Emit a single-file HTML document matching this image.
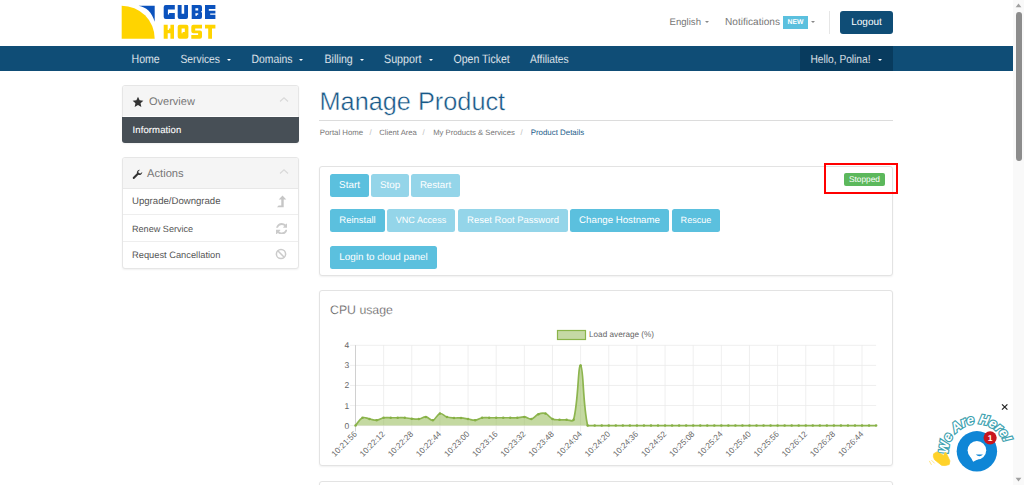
<!DOCTYPE html>
<html><head><meta charset="utf-8">
<style>
*{box-sizing:border-box;margin:0;padding:0}
html,body{width:1024px;height:485px;overflow:hidden;background:#fff;font-family:"Liberation Sans",sans-serif;color:#333;text-rendering:geometricPrecision}
.a{position:absolute;white-space:nowrap}
.ni{position:absolute;top:53.6px;font-size:10.5px;color:#f4f7fa;line-height:13px;white-space:nowrap;transform:scaleY(1.15);transform-origin:0 9px;-webkit-text-stroke:0.12px #0f4d76}
.cr{position:absolute;width:0;height:0;border-left:2px solid transparent;border-right:2px solid transparent;border-top:2px solid #fff}
.panel{position:absolute;border:1px solid #e3e3e3;border-radius:3px;background:#fff;box-shadow:0 1px 2px rgba(0,0,0,.06)}
.btn{position:absolute;height:23px;border-radius:2.5px;background:#5bc0de;color:#fff;font-size:9.6px;line-height:23px;text-align:center;white-space:nowrap}
.btn.d{background:#94d5e9}
.si{position:absolute;left:132px;font-size:9.3px;color:#555;line-height:12px;white-space:nowrap}
</style></head><body>

<!-- logo -->
<svg class="a" style="left:0;top:0" width="230" height="45" viewBox="0 0 230 45">
  <path d="M121.7 5.7 A33 33 0 0 1 154.7 38.7 L121.7 38.7 Z" fill="#ffd400"/>
  <path d="M138.6 5.7 L154.7 5.7 L154.7 21.8 C152 12 146 7 138.6 5.7 Z" fill="#0b52bd"/>
  <g fill="#0b52bd" fill-rule="evenodd">
    <path d="M165.7 5.1 h9.1 v4.4 h-6.9 v5 h1.2 v-1.4 h1.8 v0 h3.9 v5.8 h-9.1 q-2 0 -2 -2 v-9.8 q0 -2 2 -2 Z"/>
    <path d="M177.7 5.1 h3.9 v8.6 h2.6 v-8.6 h3.8 v11.8 q0 2 -2 2 h-6.3 q-2 0 -2 -2 Z"/>
    <path d="M191.7 5.1 h8.3 q2 0 2 2 v3.6 l-1 1 l1 1 v4.2 q0 2 -2 2 h-8.3 Z M195.4 8.3 v2.3 h2.8 v-2.3 Z M195.4 13.3 v2.4 h1.6 v-1 h1.2 v-1.4 Z"/>
    <path d="M205 5.1 h10.4 v3.8 h-6.6 v1.8 h6.6 v2.8 h-5.2 v1.2 h5.2 v4.2 h-10.4 Z"/>
  </g>
  <g fill="#ffd400" fill-rule="evenodd">
    <path d="M163.7 24.7 h4 v5.3 h1.2 v-1.5 h1.5 v-3.8 h3.6 v14 h-3.6 v-5.5 h-2.7 v5.5 h-4 Z"/>
    <path d="M179.7 24.7 h6.7 q2 0 2 2 v10 q0 2 -2 2 h-6.7 q-2 0 -2 -2 v-10 q0 -2 2 -2 Z M181.6 28.5 v4.8 h1 v-1.2 h2.2 v-3.6 Z"/>
    <path d="M193.3 24.7 h8.7 v3.8 h-6.8 v1.9 h4.8 q2 0 2 2 v4.3 q0 2 -2 2 h-8.7 v-3.8 h6.8 v-1.6 h-4.8 q-2 0 -2 -2 v-4.6 q0 -2 2 -2 Z"/>
    <path d="M205 24.7 h10.4 v3.9 h-3.4 v10.1 h-3.8 v-10.1 h-3.2 Z"/>
  </g>
</svg>

<!-- top right -->
<div class="a" style="left:669.5px;top:17px;font-size:9.6px;color:#777;line-height:12px">English</div>
<div class="cr" style="left:705px;top:21px;border-top-color:#888"></div>
<div class="a" style="left:725px;top:16.6px;font-size:10.1px;color:#777;line-height:12px">Notifications</div>
<div class="a" style="left:783px;top:16px;width:25px;height:13px;background:#5bc0de;color:#fff;font-size:6.8px;font-weight:bold;line-height:13.5px;text-align:center">NEW</div>
<div class="cr" style="left:811px;top:21px;border-top-color:#888"></div>
<div class="a" style="left:829px;top:11px;width:1px;height:23px;background:#e6e6e6"></div>
<div class="a" style="left:840px;top:10.5px;width:53px;height:23.5px;background:#0f4d76;border-radius:3px;color:#fff;font-size:10px;line-height:24.5px;text-align:center">Logout</div>

<!-- nav -->
<div class="a" style="left:0;top:46px;width:1013px;height:25px;background:#0f4d76"></div>
<div class="a" style="left:800px;top:46px;width:93px;height:25px;background:#083b5e"></div>
<div class="ni" style="left:131.5px;font-size:10.6px">Home</div>
<div class="ni" style="left:180.5px;font-size:10.3px">Services</div><div class="cr" style="left:227px;top:58.5px"></div>
<div class="ni" style="left:251.5px;font-size:10.4px">Domains</div><div class="cr" style="left:299px;top:58.5px"></div>
<div class="ni" style="left:324.5px;font-size:10.6px">Billing</div><div class="cr" style="left:359.5px;top:58.5px"></div>
<div class="ni" style="left:384px;font-size:10.7px">Support</div><div class="cr" style="left:428.5px;top:58.5px"></div>
<div class="ni" style="left:453.5px;font-size:10.55px">Open Ticket</div>
<div class="ni" style="left:530px;font-size:10.3px">Affiliates</div>
<div class="ni" style="left:810.5px;font-size:10.2px;-webkit-text-stroke:0.12px #083b5e">Hello, Polina!</div><div class="cr" style="left:878px;top:58.5px"></div>

<!-- sidebar overview -->
<div class="panel" style="left:122px;top:85px;width:177px;height:58px;overflow:hidden;border-color:#e6e6e6">
  <div class="a" style="left:0;top:0;width:177px;height:30px;background:#f5f5f5"></div>
</div>
<div class="a" style="left:122px;top:117px;width:177px;height:26px;background:#474f56;border-radius:0 0 3px 3px"></div>
<svg class="a" style="left:131.5px;top:95.5px" width="12" height="12" viewBox="0 0 24 24"><path d="M12 1.5l3.2 6.9 7.5.9-5.6 5.1 1.6 7.5L12 18.1l-6.7 3.8 1.6-7.5L1.3 9.3l7.5-.9z" fill="#333"/></svg>
<div class="a" style="left:149px;top:96px;font-size:11px;color:#777;line-height:13px">Overview</div>
<svg class="a" style="left:279px;top:96px" width="10" height="7" viewBox="0 0 10 7"><path d="M1 5.5 L5 1.8 L9 5.5" fill="none" stroke="#d9d9d9" stroke-width="1.2"/></svg>
<div class="a" style="left:132.5px;top:124.8px;font-size:9.5px;letter-spacing:0.12px;font-weight:normal;color:#fff;line-height:12px;-webkit-text-stroke:0.1px #fff">Information</div>

<!-- sidebar actions -->
<div class="panel" style="left:122px;top:157px;width:177px;height:112px;overflow:hidden;border-color:#e6e6e6">
  <div class="a" style="left:0;top:0;width:177px;height:31px;background:#f5f5f5;border-bottom:1px solid #e8e8e8"></div>
  <div class="a" style="left:0;top:56px;width:177px;height:1px;background:#eeeeee"></div>
  <div class="a" style="left:0;top:83px;width:177px;height:1px;background:#eeeeee"></div>
</div>
<svg class="a" style="left:132px;top:169px" width="11" height="11" viewBox="0 0 24 24"><path d="M22.5 6.5a6.5 6.5 0 0 1-8.6 6.1L5.2 21.3a2.3 2.3 0 0 1-3.2-3.2l8.7-8.7A6.5 6.5 0 0 1 17.5 1.5l-3.8 3.8.9 3.6 3.6.9z" fill="#333"/></svg>
<div class="a" style="left:147px;top:168px;font-size:11.2px;color:#777;line-height:13px">Actions</div>
<svg class="a" style="left:279px;top:168px" width="10" height="7" viewBox="0 0 10 7"><path d="M1 5.5 L5 1.8 L9 5.5" fill="none" stroke="#d9d9d9" stroke-width="1.2"/></svg>
<div class="si" style="top:196.3px;font-size:9.6px">Upgrade/Downgrade</div>
<div class="si" style="top:222.8px;font-size:9.1px">Renew Service</div>
<div class="si" style="top:248.8px;font-size:9.3px">Request Cancellation</div>
<svg class="a" style="left:276px;top:195px" width="11" height="13" viewBox="0 0 11 13"><path d="M6.5 0.6 L10.3 4.6 H7.7 V12.2 H1 L2.6 10.4 H5.3 V4.6 H2.7 Z" fill="#c6c6c6"/></svg>
<svg class="a" style="left:275.5px;top:222.5px" width="11.5" height="11.5" viewBox="0 0 1536 1536"><path d="M1511 928q0 5-1 7-64 268-268 434.5T764 1536q-146 0-282.5-55T239 1324l-129 129q-19 19-45 19t-45-19-19-45V960q0-26 19-45t45-19h448q26 0 45 19t19 45-19 45l-137 137q71 66 161 102t187 36q134 0 250-65t186-179q11-17 53-117 8-23 30-23h192q13 0 22.5 9.5t9.5 22.5zm25-800v448q0 26-19 45t-45 19h-448q-26 0-45-19t-19-45 19-45l138-138Q969 256 768 256q-134 0-250 65T332 500q-11 17-53 117-8 23-30 23H50q-13 0-22.5-9.5T18 608v-7q65-268 270-434.5T768 0q146 0 284 55.5T1297 212l130-129q19-19 45-19t45 19 19 45z" fill="#cbcbcb"/></svg>
<svg class="a" style="left:275px;top:248px" width="12" height="12" viewBox="0 0 12 12"><circle cx="6" cy="6" r="4.6" fill="none" stroke="#cbcbcb" stroke-width="1.5"/><path d="M2.8 2.8 L9.2 9.2" stroke="#cbcbcb" stroke-width="1.5"/></svg>

<!-- main title -->
<div class="a" style="left:319.5px;top:88px;font-size:25.3px;color:#175887;line-height:28px;-webkit-text-stroke:0.4px #fff">Manage Product</div>
<div class="a" style="left:319px;top:120px;width:574px;height:1px;background:#dcdcdc"></div>
<div class="a" style="left:319.8px;top:128px;font-size:7.8px;color:#777;line-height:9px">Portal Home</div>
<div class="a" style="left:369.5px;top:128px;font-size:7.8px;color:#bbb;line-height:9px">/</div>
<div class="a" style="left:379.3px;top:128px;font-size:7.7px;color:#777;line-height:9px">Client Area</div>
<div class="a" style="left:422.5px;top:128px;font-size:7.8px;color:#bbb;line-height:9px">/</div>
<div class="a" style="left:433.2px;top:128px;font-size:7.7px;color:#777;line-height:9px">My Products &amp; Services</div>
<div class="a" style="left:520.5px;top:128px;font-size:7.8px;color:#bbb;line-height:9px">/</div>
<div class="a" style="left:530.7px;top:128px;font-size:7.9px;color:#1c5d8b;line-height:9px">Product Details</div>

<!-- panel 1 -->
<div class="panel" style="left:319px;top:166px;width:574px;height:110px"></div>
<div class="btn" style="left:330px;top:174px;width:39px;font-size:9.9px">Start</div>
<div class="btn d" style="left:371px;top:174px;width:38px;font-size:9.8px">Stop</div>
<div class="btn d" style="left:411px;top:174px;width:49px;font-size:9.7px">Restart</div>
<div class="btn" style="left:330px;top:209px;width:55px;font-size:9.5px">Reinstall</div>
<div class="btn d" style="left:387px;top:209px;width:68px;font-size:9.1px">VNC Access</div>
<div class="btn d" style="left:458px;top:209px;width:110px;font-size:9.5px">Reset Root Password</div>
<div class="btn" style="left:570px;top:209px;width:99px;font-size:9.7px">Change Hostname</div>
<div class="btn" style="left:672px;top:209px;width:48px;font-size:9.1px">Rescue</div>
<div class="btn" style="left:330px;top:246px;width:107px;font-size:9.9px">Login to cloud panel</div>
<div class="a" style="left:844px;top:173px;width:41px;height:13px;background:#5cb85c;border-radius:2px;color:#fff;font-size:8.3px;line-height:13px;text-align:center">Stopped</div>
<div class="a" style="left:824px;top:163px;width:74px;height:31px;border:2.6px solid #ff0000"></div>

<!-- panel 2 -->
<div class="panel" style="left:319px;top:290px;width:574px;height:176px"></div>
<div class="a" style="left:330px;top:302.5px;font-size:12.3px;color:#444;line-height:15px;-webkit-text-stroke:0.3px #fff">CPU usage</div>
<svg class="a" style="left:0;top:0" width="1024" height="485" viewBox="0 0 1024 485">
<line x1="350" y1="425.60" x2="876.1" y2="425.60" stroke="#ebebeb" stroke-width="0.8"/>
<line x1="350" y1="405.53" x2="876.1" y2="405.53" stroke="#ebebeb" stroke-width="0.8"/>
<line x1="350" y1="385.46" x2="876.1" y2="385.46" stroke="#ebebeb" stroke-width="0.8"/>
<line x1="350" y1="365.39" x2="876.1" y2="365.39" stroke="#ebebeb" stroke-width="0.8"/>
<line x1="350" y1="345.32" x2="876.1" y2="345.32" stroke="#ebebeb" stroke-width="0.8"/>
<line x1="355.50" y1="345.2" x2="355.50" y2="431.5" stroke="#c4c4c4" stroke-width="0.8"/>
<line x1="383.64" y1="345.2" x2="383.64" y2="431.5" stroke="#ebebeb" stroke-width="0.8"/>
<line x1="411.78" y1="345.2" x2="411.78" y2="431.5" stroke="#ebebeb" stroke-width="0.8"/>
<line x1="439.92" y1="345.2" x2="439.92" y2="431.5" stroke="#ebebeb" stroke-width="0.8"/>
<line x1="468.06" y1="345.2" x2="468.06" y2="431.5" stroke="#ebebeb" stroke-width="0.8"/>
<line x1="496.20" y1="345.2" x2="496.20" y2="431.5" stroke="#ebebeb" stroke-width="0.8"/>
<line x1="524.34" y1="345.2" x2="524.34" y2="431.5" stroke="#ebebeb" stroke-width="0.8"/>
<line x1="552.48" y1="345.2" x2="552.48" y2="431.5" stroke="#ebebeb" stroke-width="0.8"/>
<line x1="580.62" y1="345.2" x2="580.62" y2="431.5" stroke="#ebebeb" stroke-width="0.8"/>
<line x1="608.76" y1="345.2" x2="608.76" y2="431.5" stroke="#ebebeb" stroke-width="0.8"/>
<line x1="636.91" y1="345.2" x2="636.91" y2="431.5" stroke="#ebebeb" stroke-width="0.8"/>
<line x1="665.05" y1="345.2" x2="665.05" y2="431.5" stroke="#ebebeb" stroke-width="0.8"/>
<line x1="693.19" y1="345.2" x2="693.19" y2="431.5" stroke="#ebebeb" stroke-width="0.8"/>
<line x1="721.33" y1="345.2" x2="721.33" y2="431.5" stroke="#ebebeb" stroke-width="0.8"/>
<line x1="749.47" y1="345.2" x2="749.47" y2="431.5" stroke="#ebebeb" stroke-width="0.8"/>
<line x1="777.61" y1="345.2" x2="777.61" y2="431.5" stroke="#ebebeb" stroke-width="0.8"/>
<line x1="805.75" y1="345.2" x2="805.75" y2="431.5" stroke="#ebebeb" stroke-width="0.8"/>
<line x1="833.89" y1="345.2" x2="833.89" y2="431.5" stroke="#ebebeb" stroke-width="0.8"/>
<line x1="862.03" y1="345.2" x2="862.03" y2="431.5" stroke="#ebebeb" stroke-width="0.8"/>
<path d="M355.50 425.60 C358.31 422.47 359.18 419.35 362.54 417.77 C364.81 416.70 366.76 418.50 369.57 418.98 C372.38 419.46 373.85 420.42 376.61 420.18 C379.48 419.94 380.75 418.27 383.64 417.77 C386.38 417.30 387.86 417.77 390.68 417.77 C393.49 417.77 394.90 417.77 397.71 417.77 C400.52 417.77 401.95 417.57 404.75 417.77 C407.57 417.97 408.95 418.53 411.78 418.78 C414.58 419.02 416.06 419.33 418.82 418.98 C421.68 418.61 423.12 416.74 425.85 416.97 C428.74 417.22 430.38 420.79 432.89 420.18 C436.01 419.42 436.81 414.27 439.92 413.56 C442.44 412.98 444.01 416.04 446.96 416.97 C449.64 417.81 451.16 417.77 453.99 417.97 C456.79 418.17 458.23 417.77 461.03 417.97 C463.86 418.18 465.25 418.54 468.06 418.98 C470.88 419.42 472.34 420.42 475.10 420.18 C477.97 419.94 479.24 418.27 482.13 417.77 C484.87 417.30 486.35 417.77 489.17 417.77 C491.98 417.77 493.39 417.77 496.20 417.77 C499.02 417.77 500.42 417.77 503.24 417.77 C506.05 417.77 507.46 417.77 510.27 417.77 C513.09 417.77 514.50 417.93 517.31 417.77 C520.13 417.61 521.58 416.73 524.34 416.97 C527.20 417.21 528.78 419.50 531.38 418.98 C534.41 418.37 535.33 415.35 538.41 414.16 C540.96 413.18 542.96 412.70 545.45 413.56 C548.58 414.63 549.35 417.59 552.48 418.98 C554.98 420.08 556.70 419.62 559.52 419.78 C562.32 419.94 563.74 419.78 566.55 419.78 C569.37 419.78 572.95 422.25 573.59 419.78 C578.58 400.50 577.95 364.28 580.62 365.39 C583.58 366.61 582.62 404.02 587.66 425.60 C588.24 425.60 591.88 425.60 594.69 425.60 C597.51 425.60 598.92 425.60 601.73 425.60 C604.54 425.60 605.95 425.60 608.76 425.60 C611.58 425.60 612.99 425.60 615.80 425.60 C618.61 425.60 620.02 425.60 622.84 425.60 C625.65 425.60 627.06 425.60 629.87 425.60 C632.68 425.60 634.09 425.60 636.91 425.60 C639.72 425.60 641.13 425.60 643.94 425.60 C646.75 425.60 648.16 425.60 650.98 425.60 C653.79 425.60 655.20 425.60 658.01 425.60 C660.82 425.60 662.23 425.60 665.05 425.60 C667.86 425.60 669.27 425.60 672.08 425.60 C674.90 425.60 676.30 425.60 679.12 425.60 C681.93 425.60 683.34 425.60 686.15 425.60 C688.97 425.60 690.37 425.60 693.19 425.60 C696.00 425.60 697.41 425.60 700.22 425.60 C703.04 425.60 704.44 425.60 707.26 425.60 C710.07 425.60 711.48 425.60 714.29 425.60 C717.11 425.60 718.51 425.60 721.33 425.60 C724.14 425.60 725.55 425.60 728.36 425.60 C731.18 425.60 732.58 425.60 735.40 425.60 C738.21 425.60 739.62 425.60 742.43 425.60 C745.25 425.60 746.65 425.60 749.47 425.60 C752.28 425.60 753.69 425.60 756.50 425.60 C759.32 425.60 760.72 425.60 763.54 425.60 C766.35 425.60 767.76 425.60 770.57 425.60 C773.39 425.60 774.79 425.60 777.61 425.60 C780.42 425.60 781.83 425.60 784.64 425.60 C787.46 425.60 788.86 425.60 791.68 425.60 C794.49 425.60 795.90 425.60 798.71 425.60 C801.53 425.60 802.93 425.60 805.75 425.60 C808.56 425.60 809.97 425.60 812.78 425.60 C815.60 425.60 817.00 425.60 819.82 425.60 C822.63 425.60 824.04 425.60 826.85 425.60 C829.67 425.60 831.08 425.60 833.89 425.60 C836.70 425.60 838.11 425.60 840.92 425.60 C843.74 425.60 845.15 425.60 847.96 425.60 C850.77 425.60 852.18 425.60 854.99 425.60 C857.81 425.60 859.22 425.60 862.03 425.60 C864.84 425.60 866.25 425.60 869.06 425.60 C871.88 425.60 873.29 425.60 876.10 425.60 L876.10 425.60 L355.50 425.60 Z" fill="rgba(142,182,75,0.52)" stroke="none"/>
<path d="M355.50 425.60 C358.31 422.47 359.18 419.35 362.54 417.77 C364.81 416.70 366.76 418.50 369.57 418.98 C372.38 419.46 373.85 420.42 376.61 420.18 C379.48 419.94 380.75 418.27 383.64 417.77 C386.38 417.30 387.86 417.77 390.68 417.77 C393.49 417.77 394.90 417.77 397.71 417.77 C400.52 417.77 401.95 417.57 404.75 417.77 C407.57 417.97 408.95 418.53 411.78 418.78 C414.58 419.02 416.06 419.33 418.82 418.98 C421.68 418.61 423.12 416.74 425.85 416.97 C428.74 417.22 430.38 420.79 432.89 420.18 C436.01 419.42 436.81 414.27 439.92 413.56 C442.44 412.98 444.01 416.04 446.96 416.97 C449.64 417.81 451.16 417.77 453.99 417.97 C456.79 418.17 458.23 417.77 461.03 417.97 C463.86 418.18 465.25 418.54 468.06 418.98 C470.88 419.42 472.34 420.42 475.10 420.18 C477.97 419.94 479.24 418.27 482.13 417.77 C484.87 417.30 486.35 417.77 489.17 417.77 C491.98 417.77 493.39 417.77 496.20 417.77 C499.02 417.77 500.42 417.77 503.24 417.77 C506.05 417.77 507.46 417.77 510.27 417.77 C513.09 417.77 514.50 417.93 517.31 417.77 C520.13 417.61 521.58 416.73 524.34 416.97 C527.20 417.21 528.78 419.50 531.38 418.98 C534.41 418.37 535.33 415.35 538.41 414.16 C540.96 413.18 542.96 412.70 545.45 413.56 C548.58 414.63 549.35 417.59 552.48 418.98 C554.98 420.08 556.70 419.62 559.52 419.78 C562.32 419.94 563.74 419.78 566.55 419.78 C569.37 419.78 572.95 422.25 573.59 419.78 C578.58 400.50 577.95 364.28 580.62 365.39 C583.58 366.61 582.62 404.02 587.66 425.60 C588.24 425.60 591.88 425.60 594.69 425.60 C597.51 425.60 598.92 425.60 601.73 425.60 C604.54 425.60 605.95 425.60 608.76 425.60 C611.58 425.60 612.99 425.60 615.80 425.60 C618.61 425.60 620.02 425.60 622.84 425.60 C625.65 425.60 627.06 425.60 629.87 425.60 C632.68 425.60 634.09 425.60 636.91 425.60 C639.72 425.60 641.13 425.60 643.94 425.60 C646.75 425.60 648.16 425.60 650.98 425.60 C653.79 425.60 655.20 425.60 658.01 425.60 C660.82 425.60 662.23 425.60 665.05 425.60 C667.86 425.60 669.27 425.60 672.08 425.60 C674.90 425.60 676.30 425.60 679.12 425.60 C681.93 425.60 683.34 425.60 686.15 425.60 C688.97 425.60 690.37 425.60 693.19 425.60 C696.00 425.60 697.41 425.60 700.22 425.60 C703.04 425.60 704.44 425.60 707.26 425.60 C710.07 425.60 711.48 425.60 714.29 425.60 C717.11 425.60 718.51 425.60 721.33 425.60 C724.14 425.60 725.55 425.60 728.36 425.60 C731.18 425.60 732.58 425.60 735.40 425.60 C738.21 425.60 739.62 425.60 742.43 425.60 C745.25 425.60 746.65 425.60 749.47 425.60 C752.28 425.60 753.69 425.60 756.50 425.60 C759.32 425.60 760.72 425.60 763.54 425.60 C766.35 425.60 767.76 425.60 770.57 425.60 C773.39 425.60 774.79 425.60 777.61 425.60 C780.42 425.60 781.83 425.60 784.64 425.60 C787.46 425.60 788.86 425.60 791.68 425.60 C794.49 425.60 795.90 425.60 798.71 425.60 C801.53 425.60 802.93 425.60 805.75 425.60 C808.56 425.60 809.97 425.60 812.78 425.60 C815.60 425.60 817.00 425.60 819.82 425.60 C822.63 425.60 824.04 425.60 826.85 425.60 C829.67 425.60 831.08 425.60 833.89 425.60 C836.70 425.60 838.11 425.60 840.92 425.60 C843.74 425.60 845.15 425.60 847.96 425.60 C850.77 425.60 852.18 425.60 854.99 425.60 C857.81 425.60 859.22 425.60 862.03 425.60 C864.84 425.60 866.25 425.60 869.06 425.60 C871.88 425.60 873.29 425.60 876.10 425.60" fill="none" stroke="#8db54f" stroke-width="1.7"/>
<circle cx="355.50" cy="425.60" r="1.25" fill="#86b044"/>
<circle cx="362.54" cy="417.77" r="1.25" fill="#86b044"/>
<circle cx="369.57" cy="418.98" r="1.25" fill="#86b044"/>
<circle cx="376.61" cy="420.18" r="1.25" fill="#86b044"/>
<circle cx="383.64" cy="417.77" r="1.25" fill="#86b044"/>
<circle cx="390.68" cy="417.77" r="1.25" fill="#86b044"/>
<circle cx="397.71" cy="417.77" r="1.25" fill="#86b044"/>
<circle cx="404.75" cy="417.77" r="1.25" fill="#86b044"/>
<circle cx="411.78" cy="418.78" r="1.25" fill="#86b044"/>
<circle cx="418.82" cy="418.98" r="1.25" fill="#86b044"/>
<circle cx="425.85" cy="416.97" r="1.25" fill="#86b044"/>
<circle cx="432.89" cy="420.18" r="1.25" fill="#86b044"/>
<circle cx="439.92" cy="413.56" r="1.25" fill="#86b044"/>
<circle cx="446.96" cy="416.97" r="1.25" fill="#86b044"/>
<circle cx="453.99" cy="417.97" r="1.25" fill="#86b044"/>
<circle cx="461.03" cy="417.97" r="1.25" fill="#86b044"/>
<circle cx="468.06" cy="418.98" r="1.25" fill="#86b044"/>
<circle cx="475.10" cy="420.18" r="1.25" fill="#86b044"/>
<circle cx="482.13" cy="417.77" r="1.25" fill="#86b044"/>
<circle cx="489.17" cy="417.77" r="1.25" fill="#86b044"/>
<circle cx="496.20" cy="417.77" r="1.25" fill="#86b044"/>
<circle cx="503.24" cy="417.77" r="1.25" fill="#86b044"/>
<circle cx="510.27" cy="417.77" r="1.25" fill="#86b044"/>
<circle cx="517.31" cy="417.77" r="1.25" fill="#86b044"/>
<circle cx="524.34" cy="416.97" r="1.25" fill="#86b044"/>
<circle cx="531.38" cy="418.98" r="1.25" fill="#86b044"/>
<circle cx="538.41" cy="414.16" r="1.25" fill="#86b044"/>
<circle cx="545.45" cy="413.56" r="1.25" fill="#86b044"/>
<circle cx="552.48" cy="418.98" r="1.25" fill="#86b044"/>
<circle cx="559.52" cy="419.78" r="1.25" fill="#86b044"/>
<circle cx="566.55" cy="419.78" r="1.25" fill="#86b044"/>
<circle cx="573.59" cy="419.78" r="1.25" fill="#86b044"/>
<circle cx="580.62" cy="365.39" r="1.25" fill="#86b044"/>
<circle cx="587.66" cy="425.60" r="1.25" fill="#86b044"/>
<circle cx="594.69" cy="425.60" r="1.25" fill="#86b044"/>
<circle cx="601.73" cy="425.60" r="1.25" fill="#86b044"/>
<circle cx="608.76" cy="425.60" r="1.25" fill="#86b044"/>
<circle cx="615.80" cy="425.60" r="1.25" fill="#86b044"/>
<circle cx="622.84" cy="425.60" r="1.25" fill="#86b044"/>
<circle cx="629.87" cy="425.60" r="1.25" fill="#86b044"/>
<circle cx="636.91" cy="425.60" r="1.25" fill="#86b044"/>
<circle cx="643.94" cy="425.60" r="1.25" fill="#86b044"/>
<circle cx="650.98" cy="425.60" r="1.25" fill="#86b044"/>
<circle cx="658.01" cy="425.60" r="1.25" fill="#86b044"/>
<circle cx="665.05" cy="425.60" r="1.25" fill="#86b044"/>
<circle cx="672.08" cy="425.60" r="1.25" fill="#86b044"/>
<circle cx="679.12" cy="425.60" r="1.25" fill="#86b044"/>
<circle cx="686.15" cy="425.60" r="1.25" fill="#86b044"/>
<circle cx="693.19" cy="425.60" r="1.25" fill="#86b044"/>
<circle cx="700.22" cy="425.60" r="1.25" fill="#86b044"/>
<circle cx="707.26" cy="425.60" r="1.25" fill="#86b044"/>
<circle cx="714.29" cy="425.60" r="1.25" fill="#86b044"/>
<circle cx="721.33" cy="425.60" r="1.25" fill="#86b044"/>
<circle cx="728.36" cy="425.60" r="1.25" fill="#86b044"/>
<circle cx="735.40" cy="425.60" r="1.25" fill="#86b044"/>
<circle cx="742.43" cy="425.60" r="1.25" fill="#86b044"/>
<circle cx="749.47" cy="425.60" r="1.25" fill="#86b044"/>
<circle cx="756.50" cy="425.60" r="1.25" fill="#86b044"/>
<circle cx="763.54" cy="425.60" r="1.25" fill="#86b044"/>
<circle cx="770.57" cy="425.60" r="1.25" fill="#86b044"/>
<circle cx="777.61" cy="425.60" r="1.25" fill="#86b044"/>
<circle cx="784.64" cy="425.60" r="1.25" fill="#86b044"/>
<circle cx="791.68" cy="425.60" r="1.25" fill="#86b044"/>
<circle cx="798.71" cy="425.60" r="1.25" fill="#86b044"/>
<circle cx="805.75" cy="425.60" r="1.25" fill="#86b044"/>
<circle cx="812.78" cy="425.60" r="1.25" fill="#86b044"/>
<circle cx="819.82" cy="425.60" r="1.25" fill="#86b044"/>
<circle cx="826.85" cy="425.60" r="1.25" fill="#86b044"/>
<circle cx="833.89" cy="425.60" r="1.25" fill="#86b044"/>
<circle cx="840.92" cy="425.60" r="1.25" fill="#86b044"/>
<circle cx="847.96" cy="425.60" r="1.25" fill="#86b044"/>
<circle cx="854.99" cy="425.60" r="1.25" fill="#86b044"/>
<circle cx="862.03" cy="425.60" r="1.25" fill="#86b044"/>
<circle cx="869.06" cy="425.60" r="1.25" fill="#86b044"/>
<circle cx="876.10" cy="425.60" r="1.25" fill="#86b044"/>
<text x="349.3" y="428.60" font-size="8.5" fill="#666" text-anchor="end" font-family="Liberation Sans">0</text>
<text x="349.3" y="408.53" font-size="8.5" fill="#666" text-anchor="end" font-family="Liberation Sans">1</text>
<text x="349.3" y="388.46" font-size="8.5" fill="#666" text-anchor="end" font-family="Liberation Sans">2</text>
<text x="349.3" y="368.39" font-size="8.5" fill="#666" text-anchor="end" font-family="Liberation Sans">3</text>
<text x="349.3" y="348.32" font-size="8.5" fill="#666" text-anchor="end" font-family="Liberation Sans">4</text>
<text transform="translate(357.40 434.6) rotate(-45)" font-size="8.2" fill="#666" text-anchor="end" font-family="Liberation Sans">10:21:56</text>
<text transform="translate(385.54 434.6) rotate(-45)" font-size="8.2" fill="#666" text-anchor="end" font-family="Liberation Sans">10:22:12</text>
<text transform="translate(413.68 434.6) rotate(-45)" font-size="8.2" fill="#666" text-anchor="end" font-family="Liberation Sans">10:22:28</text>
<text transform="translate(441.82 434.6) rotate(-45)" font-size="8.2" fill="#666" text-anchor="end" font-family="Liberation Sans">10:22:44</text>
<text transform="translate(469.96 434.6) rotate(-45)" font-size="8.2" fill="#666" text-anchor="end" font-family="Liberation Sans">10:23:00</text>
<text transform="translate(498.10 434.6) rotate(-45)" font-size="8.2" fill="#666" text-anchor="end" font-family="Liberation Sans">10:23:16</text>
<text transform="translate(526.24 434.6) rotate(-45)" font-size="8.2" fill="#666" text-anchor="end" font-family="Liberation Sans">10:23:32</text>
<text transform="translate(554.38 434.6) rotate(-45)" font-size="8.2" fill="#666" text-anchor="end" font-family="Liberation Sans">10:23:48</text>
<text transform="translate(582.52 434.6) rotate(-45)" font-size="8.2" fill="#666" text-anchor="end" font-family="Liberation Sans">10:24:04</text>
<text transform="translate(610.66 434.6) rotate(-45)" font-size="8.2" fill="#666" text-anchor="end" font-family="Liberation Sans">10:24:20</text>
<text transform="translate(638.81 434.6) rotate(-45)" font-size="8.2" fill="#666" text-anchor="end" font-family="Liberation Sans">10:24:36</text>
<text transform="translate(666.95 434.6) rotate(-45)" font-size="8.2" fill="#666" text-anchor="end" font-family="Liberation Sans">10:24:52</text>
<text transform="translate(695.09 434.6) rotate(-45)" font-size="8.2" fill="#666" text-anchor="end" font-family="Liberation Sans">10:25:08</text>
<text transform="translate(723.23 434.6) rotate(-45)" font-size="8.2" fill="#666" text-anchor="end" font-family="Liberation Sans">10:25:24</text>
<text transform="translate(751.37 434.6) rotate(-45)" font-size="8.2" fill="#666" text-anchor="end" font-family="Liberation Sans">10:25:40</text>
<text transform="translate(779.51 434.6) rotate(-45)" font-size="8.2" fill="#666" text-anchor="end" font-family="Liberation Sans">10:25:56</text>
<text transform="translate(807.65 434.6) rotate(-45)" font-size="8.2" fill="#666" text-anchor="end" font-family="Liberation Sans">10:26:12</text>
<text transform="translate(835.79 434.6) rotate(-45)" font-size="8.2" fill="#666" text-anchor="end" font-family="Liberation Sans">10:26:28</text>
<text transform="translate(863.93 434.6) rotate(-45)" font-size="8.2" fill="#666" text-anchor="end" font-family="Liberation Sans">10:26:44</text>
<rect x="557.5" y="330.5" width="28" height="9" fill="#c5d9a5" stroke="#8ab44a" stroke-width="1.2"/>
<text x="589" y="336.9" font-size="8.2" fill="#666" font-family="Liberation Sans">Load average (%)</text>
</svg>
<!-- panel 3 -->
<div class="panel" style="left:319px;top:481px;width:574px;height:40px"></div>

<!-- scrollbar -->
<div class="a" style="left:1013px;top:0;width:11px;height:485px;background:#f9f9f9"></div>
<div class="a" style="left:1015.8px;top:12px;width:6.6px;height:149px;background:#8c8c8c;border-radius:3.3px"></div>
<svg class="a" style="left:1013px;top:0" width="11" height="485" viewBox="0 0 11 485"><path d="M2.6 7.2 L5.5 3.6 L8.4 7.2Z" fill="#a0a0a0"/><path d="M2.6 477.8 L5.5 481.4 L8.4 477.8Z" fill="#a0a0a0"/></svg>

<svg class="a" style="left:900px;top:390px" width="124" height="95" viewBox="900 390 124 95">
  <defs><path id="arc" d="M948.1 454.3 A29 29 0 0 1 1005.8 448.8"/></defs>
  <path d="M1002 404.3 L1007.4 409.7 M1007.4 404.3 L1002 409.7" stroke="#222" stroke-width="1.2"/>
  <text font-family="Liberation Sans" font-weight="bold" font-style="italic" font-size="13.2" fill="#fff" stroke="#3fa2b0" stroke-width="2.4" paint-order="stroke" letter-spacing="0"><textPath href="#arc">We Are Here!</textPath></text>
  <circle cx="976.9" cy="451.3" r="20.2" fill="#0f86d6"/>
  <circle cx="976.9" cy="450.3" r="9.3" fill="#fff"/>
  <path d="M970 456 L973.2 461.8 L979.5 458.5 Z" fill="#fff"/>
  <path d="M975.8 454.6 Q979.4 457.8 983 454.6 Z" fill="#0f86d6"/>
  <circle cx="990.1" cy="437.8" r="6.6" fill="#c8161d"/>
  <text x="990.1" y="440.8" font-family="Liberation Sans" font-weight="bold" font-size="8.5" fill="#fff" text-anchor="middle">1</text>
  <path d="M933.7 453.7 L936.9 451.9 L939.8 453.3 L943.8 455.5 L944.5 453 L945.9 452.6 L947.4 455.5 L949.9 460.9 L949.2 464.5 L945.2 465.6 L941.6 465.3 L938 462.4 L934.4 459.5 L933.3 456.2 Z" fill="#ffd22a" stroke="#ffd22a" stroke-width="0.8" stroke-linejoin="round"/>
  <path d="M929.3 460.9 L931.5 464.9 M931.5 460.2 L934.7 463.4" stroke="#ffe27a" stroke-width="0.9"/>
</svg>

</body></html>
